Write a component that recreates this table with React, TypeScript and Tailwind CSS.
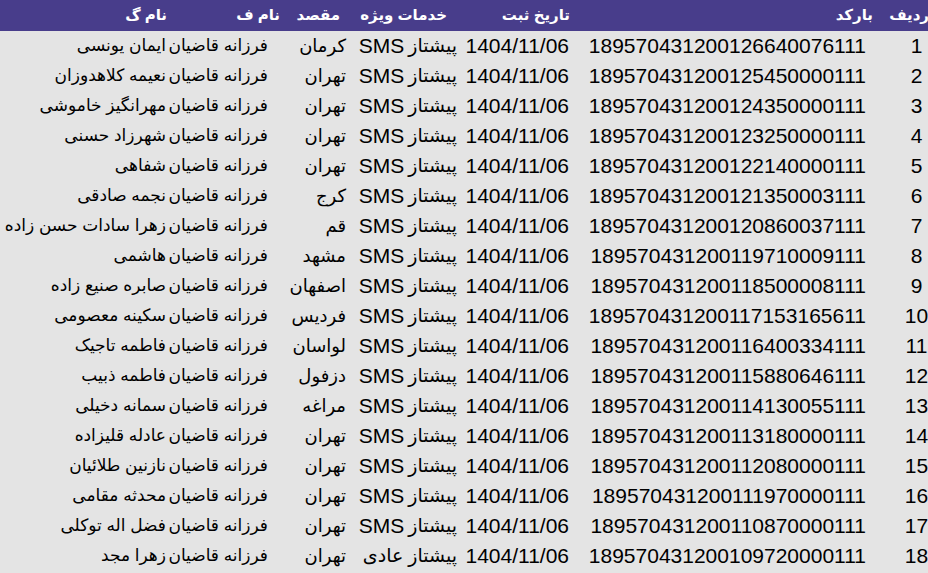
const PREFIX = '1895704312001'

type Row = { code: string; service: string; city: string; sender: string; receiver: string }

const rows: Row[] = [
  { code: '26640076111', service: 'SMS', city: 'کرمان', sender: 'فرزانه قاضیان', receiver: 'ایمان یونسی' },
  { code: '25450000111', service: 'SMS', city: 'تهران', sender: 'فرزانه قاضیان', receiver: 'نعیمه کلاهدوزان' },
  { code: '24350000111', service: 'SMS', city: 'تهران', sender: 'فرزانه قاضیان', receiver: 'مهرانگیز خاموشی' },
  { code: '23250000111', service: 'SMS', city: 'تهران', sender: 'فرزانه قاضیان', receiver: 'شهرزاد حسنی' },
  { code: '22140000111', service: 'SMS', city: 'تهران', sender: 'فرزانه قاضیان', receiver: 'شفاهی' },
  { code: '21350003111', service: 'SMS', city: 'کرج', sender: 'فرزانه قاضیان', receiver: 'نجمه صادقی' },
  { code: '20860037111', service: 'SMS', city: 'قم', sender: 'فرزانه قاضیان', receiver: 'زهرا سادات حسن زاده' },
  { code: '19710009111', service: 'SMS', city: 'مشهد', sender: 'فرزانه قاضیان', receiver: 'هاشمی' },
  { code: '18500008111', service: 'SMS', city: 'اصفهان', sender: 'فرزانه قاضیان', receiver: 'صابره صنیع زاده' },
  { code: '17153165611', service: 'SMS', city: 'فردیس', sender: 'فرزانه قاضیان', receiver: 'سکینه معصومی' },
  { code: '16400334111', service: 'SMS', city: 'لواسان', sender: 'فرزانه قاضیان', receiver: 'فاطمه تاجیک' },
  { code: '15880646111', service: 'SMS', city: 'دزفول', sender: 'فرزانه قاضیان', receiver: 'فاطمه ذبیب' },
  { code: '14130055111', service: 'SMS', city: 'مراغه', sender: 'فرزانه قاضیان', receiver: 'سمانه دخیلی' },
  { code: '13180000111', service: 'SMS', city: 'تهران', sender: 'فرزانه قاضیان', receiver: 'عادله قلیزاده' },
  { code: '12080000111', service: 'SMS', city: 'تهران', sender: 'فرزانه قاضیان', receiver: 'نازنین طلائیان' },
  { code: '11970000111', service: 'SMS', city: 'تهران', sender: 'فرزانه قاضیان', receiver: 'محدثه مقامی' },
  { code: '10870000111', service: 'SMS', city: 'تهران', sender: 'فرزانه قاضیان', receiver: 'فضل اله توکلی' },
  { code: '09720000111', service: 'عادی', city: 'تهران', sender: 'فرزانه قاضیان', receiver: 'زهرا مجد' },
]

// column widths, right to left (page is rtl)
const cols = 'grid-cols-[62px_297px_112px_111px_78px_102px_166px]'

export default function App() {
  return (
    <div
      dir="rtl"
      className="w-[928px] h-[573px] overflow-hidden bg-[#e4e4e4] text-black font-['Liberation_Sans','DejaVu_Sans',sans-serif]"
    >
      {/* header */}
      <div className="flex h-[31px] items-center bg-[#483d8b] text-white font-bold text-[15px] whitespace-nowrap">
        <div className="w-[56px] -mr-[1px] pb-[1px]">ردیف</div>
        <div className="w-[303px] pb-[1px]">بارکد</div>
        <div className="w-[123px] pb-[1px]">تاریخ ثبت</div>
        <div className="w-[107px] pb-[1px]">خدمات ویژه</div>
        <div className="w-[60px] pb-[1px]">مقصد</div>
        <div className="w-[113px] pb-[1px]">نام ف</div>
        <div className="w-[167px] pb-[1px]">نام گ</div>
      </div>

      {/* body */}
      <div className={`grid ${cols} text-[21px] whitespace-nowrap`}>
        {rows.map((r, i) => (
          <div key={i} className="contents">
            <div className="h-[30px] flex items-center justify-center pl-[39px]">{i + 1}</div>
            <div className="h-[30px] flex items-center">{PREFIX + r.code}</div>
            <div className="h-[30px] flex items-center">1404/11/06</div>
            <div className="h-[30px] flex items-center">
              <span className="text-[19px]">پیشتاز</span>
              {r.service === 'SMS' ? (
                <span className="mr-[4px]">SMS</span>
              ) : (
                <span className="mr-[5px] text-[19px]">{r.service}</span>
              )}
            </div>
            <div className="h-[30px] flex items-center text-[18px]">{r.city}</div>
            <div className="h-[30px] flex items-center text-[17px]">{r.sender}</div>
            <div className="h-[30px] flex items-center text-[17px]">{r.receiver}</div>
          </div>
        ))}
      </div>
    </div>
  )
}
